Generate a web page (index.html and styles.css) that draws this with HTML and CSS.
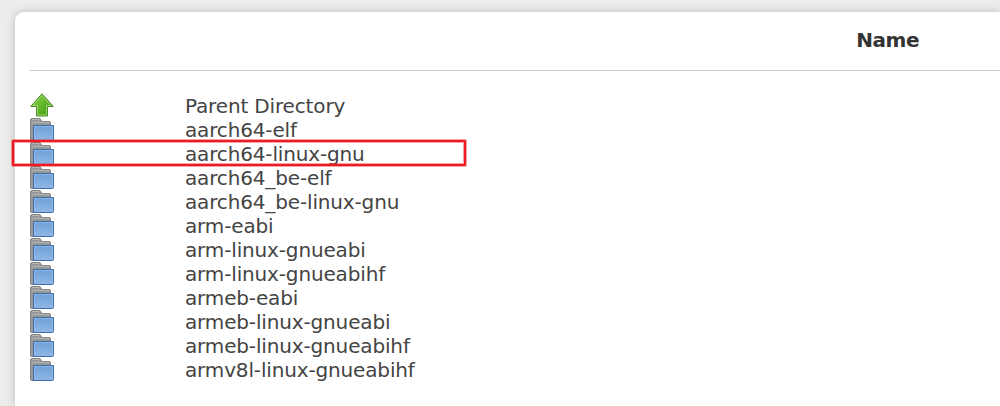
FILE: index.html
```
<!DOCTYPE html>
<html lang="en">
<head>
  <meta charset="UTF-8">
  <title>Index of /components/toolchain/binaries</title>
  <link rel="stylesheet" href="styles.css">
</head>
<body>
  <svg class="defs">
    <defs>
      <linearGradient id="blue" x1="0" y1="0" x2="0" y2="1">
        <stop offset="0" stop-color="#6f9fd8"/>
        <stop offset="1" stop-color="#8fb8e6"/>
      </linearGradient>
      <linearGradient id="green" x1="0" y1="0" x2="1" y2="1">
        <stop offset="0" stop-color="#91d24b"/>
        <stop offset="1" stop-color="#379b0b"/>
      </linearGradient>
      <symbol id="folder" viewBox="0 0 24 24">
        <path d="M.5 22.5V3Q.5 1.5 2 1.5H10L12 4.5H19.5Q20.5 4.5 20.5 5.5V23.5H1.5Q.5 23.5 .5 22.5Z" fill="#999" stroke="#858585"/>
        <path d="M2 2.5H9.5M2 5.5H19" stroke="#b5b5b5" fill="none"/>
        <path d="M3.5 8.5H23.5V22.5Q23.5 23.5 22.5 23.5H3.5Z" fill="url(#blue)" stroke="#3e6dab"/>
        <path d="M4.5 22.5V9.5H22.5V22.5" fill="none" stroke="#a3c5e9" stroke-opacity=".5"/>
      </symbol>
      <symbol id="up" viewBox="0 0 24 24">
        <path d="M12 .7L23.3 13.5H17.5V23H6.5V13.5H.7Z" fill="url(#green)" stroke="#4f8a30"/>
        <path d="M12 2.3L21 12.5H16.5V22H7.5V12.5H3Z" fill="none" stroke="#b3e480" stroke-opacity=".7"/>
      </symbol>
    </defs>
  </svg>
  <div class="panel">
    <table>
      <thead>
        <tr><th class="icon"></th><th>Name</th></tr>
      </thead>
      <tbody>
        <tr><td><svg><use href="#up"/></svg></td><td>Parent Directory</td></tr>
        <tr><td><svg><use href="#folder"/></svg></td><td>aarch64-elf</td></tr>
        <tr><td class="marked"><svg><use href="#folder"/></svg></td><td>aarch64-linux-gnu</td></tr>
        <tr><td><svg><use href="#folder"/></svg></td><td>aarch64_be-elf</td></tr>
        <tr><td><svg><use href="#folder"/></svg></td><td>aarch64_be-linux-gnu</td></tr>
        <tr><td><svg><use href="#folder"/></svg></td><td>arm-eabi</td></tr>
        <tr><td><svg><use href="#folder"/></svg></td><td>arm-linux-gnueabi</td></tr>
        <tr><td><svg><use href="#folder"/></svg></td><td>arm-linux-gnueabihf</td></tr>
        <tr><td><svg><use href="#folder"/></svg></td><td>armeb-eabi</td></tr>
        <tr><td><svg><use href="#folder"/></svg></td><td>armeb-linux-gnueabi</td></tr>
        <tr><td><svg><use href="#folder"/></svg></td><td>armeb-linux-gnueabihf</td></tr>
        <tr><td><svg><use href="#folder"/></svg></td><td>armv8l-linux-gnueabihf</td></tr>
      </tbody>
    </table>
  </div>
</body>
</html>
```
FILE: styles.css
```
body { display: flow-root; margin: 0; background: #ededed; color: #444; font: 20px/24px Verdana, "DejaVu Sans", sans-serif; }
.defs { position: absolute; width: 0; height: 0; }
.panel { box-sizing: border-box; height: 394px; margin: 12px 0 0 15px; padding-left: 15px; background: #fff; border-radius: 9px 0 0 0; box-shadow: 0 0 10px #bbb; }
table { width: 100%; table-layout: fixed; border-spacing: 0; }
th, td { padding: 0; }
th { height: 56px; padding: 0 81px 2px 0; border-bottom: 1px solid #c8c8c8; color: #333; text-align: right; letter-spacing: -0.5px; }
th.icon { width: 155px; padding-right: 0; }
tbody::before { content: ""; display: block; height: 22px; }
td { height: 24px; letter-spacing: -0.15px; white-space: nowrap; }
td + td { line-height: 22px; padding-top: 2px; height: 22px; }
td svg { display: block; width: 24px; height: 24px; }
.marked { position: relative; }
.marked::after { content: ""; position: absolute; left: -18px; top: -1px; box-sizing: border-box; width: 454px; height: 26px; border: 2px solid #ed1c24; border-radius: 1px; box-shadow: 0 0 0 1px #ed1c2466, inset 0 0 0 1px #ed1c2466; }
```
